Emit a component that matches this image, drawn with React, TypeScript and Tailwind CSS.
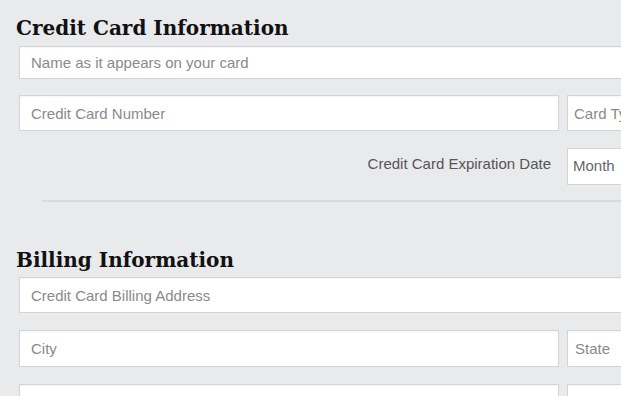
import React from 'react';

const boxCls =
  'h-full w-full border border-[#d3d4d6] bg-white text-[15px] text-[#444] outline-none placeholder:text-[#8a8a8a] shadow-[inset_0_1px_1px_rgba(0,0,0,0.04)]';

const Field = ({ placeholder, className = '', pad = 'px-[11px]' }: { placeholder: string; className?: string; pad?: string }) => (
  <div className={className}>
    <input type="text" placeholder={placeholder} className={`${boxCls} ${pad}`} />
  </div>
);

const App = () => {
  return (
    <div className="h-screen w-full overflow-hidden bg-[#e9eaec] font-['Liberation_Sans',Arial,sans-serif]">
      <div className="w-[780px] pt-[14px]">
        {/* 카드 정보 */}
        <h2 className="pl-[16px] font-['DejaVu_Serif',Georgia,serif] text-[20px] font-bold leading-[28px] text-[#111]">
          Credit Card Information
        </h2>
        <div className="mt-[4px] flex flex-col pl-[19px]">
          <Field placeholder="Name as it appears on your card" className="h-[33px]" />
          <div className="mt-[16px] grid h-[36px] grid-cols-[540px_1fr] gap-[8px]">
            <Field placeholder="Credit Card Number" />
            <Field placeholder="Card Type" pad="px-[6px]" />
          </div>
          <div className="mt-[17px] grid h-[37px] grid-cols-[540px_1fr] gap-[8px]">
            <div className="flex items-start justify-end pr-[8px] pt-[5px] text-[15px] text-[#555]">
              Credit Card Expiration Date
            </div>
            <div className="flex h-full items-center border border-[#d3d4d6] bg-white px-[5px] text-[15px] text-[#666]">
              Month
            </div>
          </div>
        </div>
        <div className="ml-[42px] mt-[15px] h-[2px] bg-[#d9dadc]" />

        {/* 청구 정보 */}
        <h2 className="mt-[44px] pl-[16px] font-['DejaVu_Serif',Georgia,serif] text-[20px] font-bold leading-[28px] text-[#111]">
          Billing Information
        </h2>
        <div className="mt-[3px] flex flex-col pl-[19px]">
          <Field placeholder="Credit Card Billing Address" className="h-[36px]" />
          <div className="mt-[17px] grid h-[37px] grid-cols-[540px_1fr] gap-[8px]">
            <Field placeholder="City" />
            <Field placeholder="State" pad="px-[7px]" />
          </div>
          <div className="mt-[17px] grid h-[37px] grid-cols-[540px_1fr] gap-[8px]">
            <Field placeholder="Phone Number" />
            <Field placeholder="Zip Code" pad="px-[7px]" />
          </div>
        </div>
      </div>
    </div>
  );
};

export default App;
